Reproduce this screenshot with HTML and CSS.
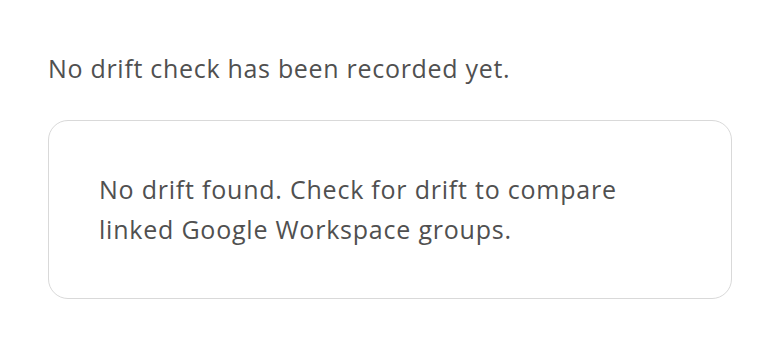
FILE: index.html
```html
<!DOCTYPE html>
<html>
<head>
<meta charset="utf-8">
<link rel="stylesheet" href="styles.css">
</head>
<body>
<main class="page">
  <p class="status">No drift check has been recorded yet.</p>
  <section class="card">
    <p class="card-text">No drift found. Check for drift to compare<br>linked Google Workspace groups.</p>
  </section>
</main>
</body>
</html>
```
FILE: styles.css
```css
html, body {
  margin: 0;
  padding: 0;
  background: #ffffff;
}
body {
  font-family: "Open Sans", "Liberation Sans", sans-serif;
  color: #505050;
}
.page {
  padding: 50px 48px 0 48px;
  display: flex;
  flex-direction: column;
  gap: 34px;
}
.status {
  margin: 0;
  font-size: 25px;
  line-height: 36px;
  letter-spacing: 0.7px;
}
.card {
  border: 1.5px solid #d9d9d9;
  border-radius: 20px;
  padding: 48px 50px 49px 50px;
}
.card-text {
  margin: 0;
  font-size: 25px;
  line-height: 40px;
  letter-spacing: 0.78px;
}
```
